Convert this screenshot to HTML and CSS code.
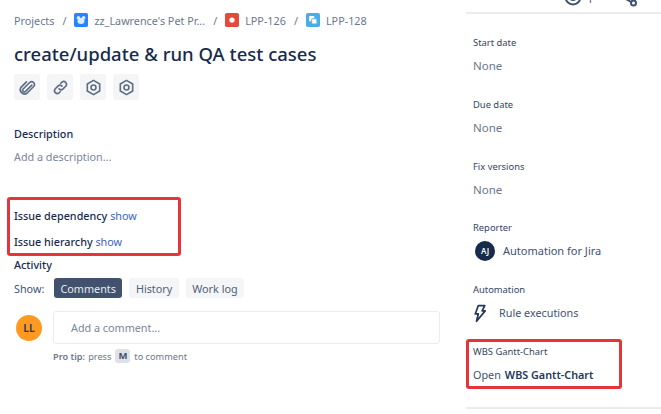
FILE: index.html
```html
<!DOCTYPE html>
<html lang="en">
<head>
  <meta charset="UTF-8">
  <title>create/update &amp; run QA test cases</title>
  <link rel="stylesheet" href="styles.css">
</head>
<body>
  <div class="page">
    <div class="main">
      <div class="crumbs">
        <span>Projects</span>
        <span class="sep">/</span>
        <svg class="crumb_icon" viewBox="0 0 16 16"><rect width="16" height="16" rx="2" fill="#2684ff"/><circle cx="5" cy="5.5" r="2" fill="#deebff"/><circle cx="11" cy="5.5" r="2" fill="#deebff"/><ellipse cx="8" cy="9" rx="4" ry="3.5" fill="#deebff"/></svg>
        <span>zz_Lawrence's Pet Pr...</span>
        <span class="sep">/</span>
        <svg class="crumb_icon" viewBox="0 0 16 16"><rect width="16" height="16" rx="2" fill="#e5493a"/><circle cx="8" cy="8" r="3" fill="#fff"/></svg>
        <span>LPP-126</span>
        <span class="sep">/</span>
        <svg class="crumb_icon" viewBox="0 0 16 16"><rect width="16" height="16" rx="2" fill="#4bade8"/><rect x="3.5" y="3.5" width="6" height="6" rx="1" fill="#fff"/><rect x="6.5" y="6.5" width="6" height="6" rx="1" fill="#fff" stroke="#4bade8"/></svg>
        <span>LPP-128</span>
      </div>
      <h1>create/update &amp; run QA test cases</h1>
      <div class="actions">
        <button class="icon_btn">
          <svg viewBox="0 0 20 20"><path d="M14.500 7.500l-6.800 6.800a1.800 1.800 0 0 1-2.500-2.500l7.300-7.300a3 3 0 0 1 4.200 4.200l-7.600 7.600a4.600 4.600 0 0 1-6.200-6.200l6-6"/></svg>
        </button>
        <button class="icon_btn">
          <svg viewBox="0 0 20 20"><path d="M8.500 11.500a3 3 0 0 0 4.200 0l3-3a3 3 0 0 0-4.200-4.200l-1.200 1.200M11.500 8.500a3 3 0 0 0-4.200 0l-3 3a3 3 0 0 0 4.200 4.200l1.200-1.200"/></svg>
        </button>
        <button class="icon_btn">
          <svg viewBox="0 0 20 20"><path d="M10 2.500l6.500 3.750v7.500L10 17.500l-6.500-3.750v-7.500z"/><circle cx="10" cy="10" r="2.600"/></svg>
        </button>
        <button class="icon_btn">
          <svg viewBox="0 0 20 20"><path d="M10 2.500l6.500 3.750v7.500L10 17.500l-6.500-3.750v-7.500z"/><circle cx="10" cy="10" r="2.600"/></svg>
        </button>
      </div>
      <h2 class="desc_title">Description</h2>
      <div class="placeholder">Add a description...</div>
      <div class="red_box links_box">
        <div class="link_row"><b>Issue dependency</b> <a>show</a></div>
        <div class="link_row"><b>Issue hierarchy</b> <a>show</a></div>
      </div>
      <h2 class="activity_title">Activity</h2>
      <div class="tabs">
        <span class="tabs_label">Show:</span>
        <button class="tab active">Comments</button>
        <button class="tab">History</button>
        <button class="tab">Work log</button>
      </div>
      <div class="comment">
        <div class="avatar">LL</div>
        <div class="comment_input">Add a comment...</div>
      </div>
      <div class="tip"><b>Pro tip:</b> press <kbd>M</kbd> to comment</div>
    </div>

    <div class="side">
      <div class="side_top">
        <svg class="watch" viewBox="0 0 20 20"><circle cx="10" cy="10" r="7.500"/><circle cx="10" cy="10" r="3"/></svg>
        <span class="watch_count">1</span>
        <svg class="share" viewBox="0 0 20 20"><path d="M3 9l10 6"/><circle cx="15.500" cy="16" r="2.500"/></svg>
      </div>
      <div class="side_body">
        <div class="field">
          <div class="field_label">Start date</div>
          <div class="field_value muted">None</div>
        </div>
        <div class="field">
          <div class="field_label">Due date</div>
          <div class="field_value muted">None</div>
        </div>
        <div class="field">
          <div class="field_label">Fix versions</div>
          <div class="field_value muted">None</div>
        </div>
        <div class="field">
          <div class="field_label">Reporter</div>
          <div class="field_value person"><span class="avatar_small">AJ</span>Automation for Jira</div>
        </div>
        <div class="field">
          <div class="field_label">Automation</div>
          <div class="field_value rule">
            <svg class="bolt" viewBox="0 0 16 22"><path d="M6 2h7.500L10.500 8h3.500L4 20l2-8.500H2.500z"/></svg>
            Rule executions
          </div>
        </div>
        <div class="red_box wbs_box">
          <div class="field_label">WBS Gantt-Chart</div>
          <div class="field_value">Open <b>WBS Gantt-Chart</b></div>
        </div>
      </div>
    </div>
  </div>
</body>
</html>
```

FILE: styles.css
```css
* {
  box-sizing: border-box;
}

html, body {
  height: 100%;
}

body {
  margin: 0;
  background-color: #fff;
  color: #172b4d;
  font-family: "Noto Sans", sans-serif;
  font-size: 10.8px;
  overflow: hidden;
}

.page {
  display: flex;
  height: 414px;
}

.main {
  width: 466px;
  padding: 12px 0 0 14px;
}

.crumbs {
  display: flex;
  align-items: center;
  height: 16px;
  color: #6b778c;
}

.crumb_icon {
  width: 14px;
  height: 14px;
  margin-right: 6px;
}

.sep {
  margin: 0 8px;
}

h1 {
  margin: 14px 0 0;
  font-size: 18.5px;
  line-height: 24px;
  font-weight: 500;
}

h2 {
  margin: 0;
  font-size: 10.8px;
  line-height: 16px;
  font-weight: 500;
}

.actions {
  display: flex;
  gap: 7px;
  margin-top: 8px;
}

.icon_btn {
  display: flex;
  align-items: center;
  justify-content: center;
  width: 26px;
  height: 26px;
  padding: 0;
  border: 0;
  border-radius: 3px;
  background-color: #f4f5f7;
}

.icon_btn svg {
  width: 19px;
  height: 19px;
  fill: none;
  stroke: #5e6c84;
  stroke-width: 1.7;
  stroke-linecap: round;
}

.desc_title {
  margin-top: 26px;
}

.placeholder {
  margin-top: 7px;
  line-height: 16px;
  color: #7a869a;
}

.red_box {
  border: 3px solid #e5343a;
  border-radius: 3px;
}

.links_box {
  width: 174px;
  height: 59px;
  margin: 32px 0 0 -7px;
  padding: 8px 0 0 4px;
}

.link_row {
  height: 26px;
  line-height: 16px;
}

.link_row b {
  font-weight: 500;
}

.link_row a {
  color: #3b63c4;
}

.activity_title {
  margin-top: 1px;
}

.tabs {
  display: flex;
  align-items: center;
  margin-top: 5px;
}

.tabs_label {
  width: 40px;
  color: #42526e;
}

.tab {
  height: 20px;
  margin-right: 7px;
  padding: 0 6.5px;
  border: 0;
  border-radius: 3px;
  background-color: #f4f5f7;
  color: #505f79;
  font-family: inherit;
  font-size: 10.8px;
}

.tab.active {
  background-color: #42526e;
  color: #e6ecf5;
}

.comment {
  display: flex;
  align-items: center;
  gap: 11px;
  margin-top: 13px;
  margin-left: 2px;
}

.avatar {
  display: flex;
  align-items: center;
  justify-content: center;
  width: 26px;
  height: 26px;
  border-radius: 50%;
  background-color: #ff991f;
  color: #253858;
  font-size: 10.5px;
  font-weight: 600;
}

.comment_input {
  width: 387px;
  height: 33px;
  padding: 0 17px;
  border: 1px solid #ebecf0;
  border-radius: 3px;
  line-height: 31px;
  color: #7a869a;
}

.tip {
  display: flex;
  align-items: center;
  gap: 3px;
  height: 16px;
  margin: 4px 0 0 39px;
  font-size: 9.2px;
  color: #6b778c;
}

.tip b {
  font-weight: 600;
}

kbd {
  padding: 0 3px;
  margin: 0 1px;
  border-radius: 3px;
  background-color: #dfe1e6;
  color: #42526e;
  font-family: inherit;
  font-size: 9.5px;
  font-weight: 700;
  line-height: 14px;
}

.side {
  flex: 1;
}

.side_top {
  display: flex;
  align-items: flex-end;
  height: 14px;
  padding-bottom: 5px;
  border-bottom: 2px solid #ebecf0;
  overflow: hidden;
  color: #42526e;
}

.watch, .share {
  flex: none;
  width: 20px;
  height: 20px;
  fill: none;
  stroke: #42526e;
  stroke-width: 2;
}

.watch {
  margin-left: 97px;
}

.watch_count {
  margin-left: 4px;
  line-height: 16px;
}

.share {
  margin-left: 25px;
}

.side_body {
  height: 395px;
  padding: 21px 0 0 7px;
  border-bottom: 2px solid #ebecf0;
}

.field {
  height: 61.75px;
}

.field_label {
  font-size: 9.4px;
  line-height: 16px;
  color: #344563;
}

.field_value {
  display: flex;
  align-items: center;
  margin-top: 7px;
  height: 16px;
  line-height: 16px;
  color: #42526e;
}

.muted {
  color: #6b778c;
  font-size: 11.5px;
}

.person {
  font-size: 11px;
}

.avatar_small {
  display: flex;
  align-items: center;
  justify-content: center;
  width: 20px;
  height: 20px;
  margin: 0 8px 0 2px;
  border-radius: 50%;
  background-color: #172b4d;
  color: #fff;
  font-size: 8px;
  font-weight: 600;
}

.bolt {
  width: 14px;
  height: 19px;
  margin-right: 12px;
  fill: none;
  stroke: #253858;
  stroke-width: 2;
  stroke-linejoin: round;
}

.wbs_box {
  width: 156px;
  height: 50px;
  margin: -5px 0 0 -7px;
  padding: 2px 0 0 4px;
}

.wbs_box .field_value b {
  margin-left: 4px;
  font-weight: 600;
  color: #253858;
}
```
